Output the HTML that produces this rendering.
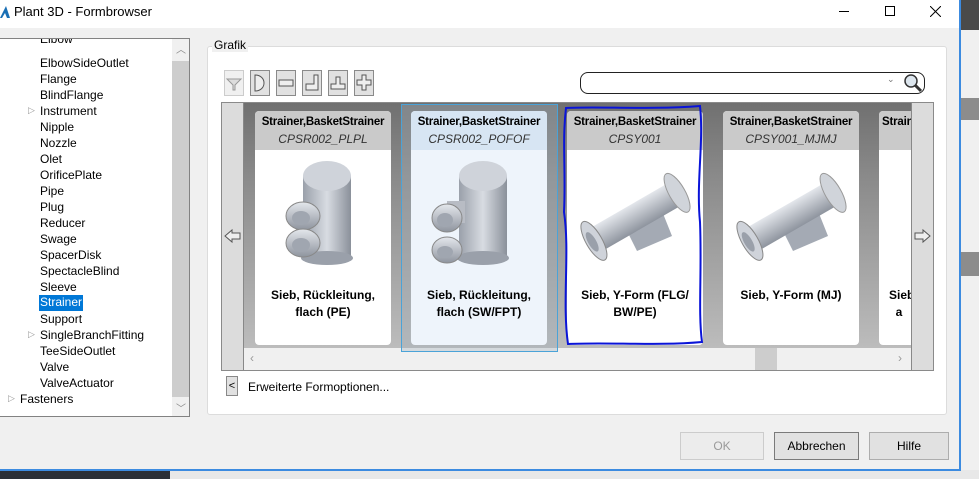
<!DOCTYPE html>
<html><head><meta charset="utf-8"><style>
*{margin:0;padding:0;box-sizing:border-box}
body{width:979px;height:479px;overflow:hidden;background:#fff;font-family:"Liberation Sans",sans-serif;font-size:12px;color:#000;position:relative}
.a{position:absolute}
.tree div{position:absolute;left:40px;font-size:12px;white-space:nowrap}
.tb{position:absolute;top:70px;width:20px;height:26px;background:#e1e1e1;border:1px solid #8a8a8a}
.card{position:absolute;top:111px;width:136px;height:234px;background:#fff;border-radius:4px;overflow:hidden}
.card .h{background:#cacaca;height:39px;text-align:center;padding-top:3px}
.card .h b{display:block;font-size:11.5px;line-height:16px;letter-spacing:-0.2px}
.card .h i{display:block;font-size:12px;line-height:18px;color:#333}
.card .t{position:absolute;top:176px;left:0;width:136px;text-align:center;font-weight:bold;font-size:12px;line-height:17px}
.card svg{position:absolute;left:0;top:45px}
.btn{position:absolute;top:432px;height:28px;border:1px solid #adadad;background:#e1e1e1;text-align:center;line-height:26px;font-size:12px}
</style></head><body>
<div class="a" style="left:961px;top:0;width:18px;height:479px;background:#f0f0f0"></div>
<div class="a" style="left:961px;top:0;width:18px;height:30px;background:#4a4a4a"></div>
<div class="a" style="left:961px;top:98px;width:18px;height:22px;background:#8c8c8c"></div>
<div class="a" style="left:961px;top:252px;width:18px;height:24px;background:#8c8c8c"></div>
<div class="a" style="left:0;top:470px;width:979px;height:9px;background:#e8e8e8"></div>
<div class="a" style="left:0;top:470px;width:170px;height:9px;background:#2b2f36"></div>
<div class="a" style="left:0;top:469px;width:961px;height:2px;background:#3c8be0"></div>
<div class="a" style="left:959px;top:0;width:2px;height:471px;background:#3c8be0"></div>
<div class="a" style="left:0;top:0;width:959px;height:469px;background:#f0f0f0"></div>
<div class="a" style="left:0;top:0;width:959px;height:28px;background:#fff"></div>
<svg class="a" style="left:0;top:5px" width="10" height="14"><path d="M0 13 L6 1 L10 13 L7 13 L5 8 L2 13Z" fill="#1a6fb5"/></svg>
<div class="a" style="left:14px;top:4px;font-size:13px">Plant 3D - Formbrowser</div>
<div class="a" style="left:839px;top:11px;width:10px;height:1px;background:#000"></div>
<div class="a" style="left:885px;top:6px;width:10px;height:10px;border:1px solid #000"></div>
<svg class="a" style="left:930px;top:6px" width="11" height="11"><path d="M0 0L11 11M11 0L0 11" stroke="#000"/></svg>
<div class="a tree" style="left:0;top:38px;width:190px;height:379px;background:#fff;border:1px solid #828282;border-left:none;overflow:hidden">
<div style="top:-7px;color:#000">Elbow</div>
<div style="top:17px">ElbowSideOutlet</div>
<div style="top:33px">Flange</div>
<div style="top:49px">BlindFlange</div>
<div style="top:65px">Instrument</div>
<div style="top:81px">Nipple</div>
<div style="top:97px">Nozzle</div>
<div style="top:113px">Olet</div>
<div style="top:129px">OrificePlate</div>
<div style="top:145px">Pipe</div>
<div style="top:161px">Plug</div>
<div style="top:177px">Reducer</div>
<div style="top:193px">Swage</div>
<div style="top:209px">SpacerDisk</div>
<div style="top:225px">SpectacleBlind</div>
<div style="top:241px">Sleeve</div>
<div style="top:256px;left:39px;background:#0078d7;color:#fff;padding:0 1px;height:16px">Strainer</div>
<div style="top:273px">Support</div>
<div style="top:289px">SingleBranchFitting</div>
<div style="top:305px">TeeSideOutlet</div>
<div style="top:321px">Valve</div>
<div style="top:337px">ValveActuator</div>
<div style="top:353px;left:20px">Fasteners</div>
<div style="top:66px;left:28px;color:#999;font-size:9px">▷</div>
<div style="top:290px;left:28px;color:#999;font-size:9px">▷</div>
<div style="top:354px;left:8px;color:#999;font-size:9px">▷</div>
<div style="left:172px;top:0;width:17px;height:378px;background:#f0f0f0"></div>
<div style="left:172px;top:22px;width:17px;height:336px;background:#cdcdcd"></div>
<div style="left:176px;top:2px;color:#888;font-size:10px">︿</div>
<div style="left:176px;top:361px;color:#888;font-size:10px">﹀</div>
</div>
<div class="a" style="left:207px;top:46px;width:740px;height:369px;background:#fff;border:1px solid #dcdcdc;border-radius:3px"></div>
<div class="a" style="left:212px;top:38px;padding:0 2px;background:#f0f0f0;font-size:12px">Grafik</div>
<div class="tb" style="left:224px;background:#f0f0f0;border-color:#ccc"><svg width="18" height="24"><path d="M2 8H16L10 14V19H8V14Z" fill="#ddd" stroke="#999"/></svg></div>
<div class="tb" style="left:250px"><svg width="18" height="24"><path d="M4 4V20C16 20 16 4 4 4Z" fill="#eee" stroke="#555"/></svg></div>
<div class="tb" style="left:276px"><svg width="18" height="24"><rect x="2" y="9" width="14" height="6" fill="#eee" stroke="#555"/></svg></div>
<div class="tb" style="left:302px"><svg width="18" height="24"><path d="M3 13H11V4H15V19H3Z" fill="#eee" stroke="#555"/></svg></div>
<div class="tb" style="left:328px"><svg width="18" height="24"><path d="M7 6H11V13H16V18H2V13H7Z" fill="#eee" stroke="#555"/></svg></div>
<div class="tb" style="left:354px"><svg width="18" height="24"><path d="M7 4H11V9H16V14H11V19H7V14H2V9H7Z" fill="#eee" stroke="#555"/></svg></div>
<div class="a" style="left:580px;top:72px;width:345px;height:22px;border:1px solid #222;border-radius:8px;background:#fff"></div>
<div class="a" style="left:887px;top:74px;color:#777;font-size:9px">⌄</div>
<svg class="a" style="left:903px;top:73px" width="20" height="20"><circle cx="8" cy="8" r="6" fill="#dde6ee" stroke="#333" stroke-width="1.5"/><path d="M12 12L18 18" stroke="#333" stroke-width="3"/></svg>
<div class="a" style="left:221px;top:102px;width:713px;height:269px;border:1px solid #8a8a8a;background:#dcdcdc"></div>
<div class="a" style="left:243px;top:103px;width:668px;height:245px;background:linear-gradient(#707070,#8a8a8a 30%,#bcbcbc)"></div>
<div class="a" style="left:243px;top:348px;width:668px;height:22px;background:#f0f0f0"></div>
<div class="a" style="left:755px;top:348px;width:22px;height:22px;background:#cdcdcd"></div>
<div class="a" style="left:250px;top:351px;color:#999">‹</div>
<div class="a" style="left:898px;top:351px;color:#999">›</div>
<div class="a" style="left:911px;top:103px;width:1px;height:267px;background:#888"></div>
<div class="a" style="left:243px;top:103px;width:1px;height:267px;background:#888"></div>
<svg class="a" style="left:224px;top:228px" width="18" height="16"><path d="M1 8L8 2V5H16V11H8V14Z" fill="#eee" stroke="#555"/></svg>
<svg class="a" style="left:913px;top:228px" width="18" height="16"><path d="M17 8L10 2V5H2V11H10V14Z" fill="#eee" stroke="#555"/></svg>
<div class="a" style="left:401px;top:104px;width:157px;height:248px;border:1px solid #4aa3d8;background:rgba(160,175,185,.35)"></div>
<svg width="0" height="0" style="position:absolute"><defs>
<linearGradient id="g" x1="0" x2="1"><stop offset="0" stop-color="#9aa0aa"/><stop offset=".5" stop-color="#d8dce2"/><stop offset="1" stop-color="#8a909a"/></linearGradient>
<linearGradient id="g2" x1="0" y1="0" x2="0" y2="1"><stop offset="0" stop-color="#e4e7ec"/><stop offset="1" stop-color="#8e949e"/></linearGradient>
</defs></svg>
<div class="card" style="left:255px"><div class="h"><b>Strainer,BasketStrainer</b><i>CPSR002_PLPL</i></div>
<svg width="136" height="130"><rect x="48" y="20" width="48" height="82" fill="url(#g)"/><ellipse cx="72" cy="102" rx="26" ry="7" fill="#9aa0aa"/><ellipse cx="72" cy="20" rx="24" ry="15" fill="#cfd3da"/><ellipse cx="48" cy="60" rx="17" ry="14" fill="url(#g2)" stroke="#888"/><ellipse cx="46" cy="62" rx="9" ry="7" fill="#a0a6b0"/><ellipse cx="48" cy="87" rx="17" ry="14" fill="url(#g2)" stroke="#888"/><ellipse cx="46" cy="89" rx="9" ry="7" fill="#a0a6b0"/></svg>
<div class="t">Sieb, Rückleitung,<br>flach (PE)</div></div>
<div class="card" style="left:411px;background:#eef4fb"><div class="h" style="background:#d7e5f3"><b>Strainer,BasketStrainer</b><i>CPSR002_POFOF</i></div>
<svg width="136" height="130"><rect x="48" y="20" width="48" height="82" fill="url(#g)"/><ellipse cx="72" cy="102" rx="26" ry="7" fill="#9aa0aa"/><ellipse cx="72" cy="20" rx="24" ry="15" fill="#cfd3da"/><rect x="36" y="45" width="18" height="22" fill="#b8bcc4"/><ellipse cx="36" cy="62" rx="15" ry="14" fill="url(#g2)" stroke="#888"/><ellipse cx="34" cy="64" rx="8" ry="7" fill="#a0a6b0"/><ellipse cx="36" cy="94" rx="15" ry="13" fill="url(#g2)" stroke="#888"/><ellipse cx="34" cy="96" rx="8" ry="6" fill="#a0a6b0"/></svg>
<div class="t">Sieb, Rückleitung,<br>flach (SW/FPT)</div></div>
<div class="card" style="left:567px"><div class="h"><b>Strainer,BasketStrainer</b><i>CPSY001</i></div>
<svg width="136" height="130"><path d="M60 75L95 55L105 80L70 95Z" fill="#a4aab4"/><g transform="rotate(-30 68 60)"><rect x="20" y="48" width="96" height="26" fill="url(#g2)"/><ellipse cx="20" cy="61" rx="8" ry="22" fill="#cfd3da" stroke="#888"/><ellipse cx="18" cy="61" rx="4" ry="11" fill="#9aa0aa"/><ellipse cx="116" cy="61" rx="8" ry="22" fill="#d0d4da" stroke="#999"/></g></svg>
<div class="t">Sieb, Y-Form (FLG/<br>BW/PE)</div></div>
<div class="card" style="left:723px"><div class="h"><b>Strainer,BasketStrainer</b><i>CPSY001_MJMJ</i></div>
<svg width="136" height="130"><path d="M60 75L95 55L105 80L70 95Z" fill="#a4aab4"/><g transform="rotate(-30 68 60)"><rect x="20" y="48" width="96" height="26" fill="url(#g2)"/><ellipse cx="20" cy="61" rx="8" ry="22" fill="#cfd3da" stroke="#888"/><ellipse cx="18" cy="61" rx="4" ry="11" fill="#9aa0aa"/><ellipse cx="116" cy="61" rx="8" ry="22" fill="#d0d4da" stroke="#999"/></g></svg>
<div class="t">Sieb, Y-Form (MJ)</div></div>
<div class="card" style="left:879px;width:32px;border-radius:4px 0 0 4px"><div class="h" style="width:136px;text-align:left;padding-left:3px"><b>Strainer</b></div>
<div class="t" style="text-align:left;left:10px">Sieb<br>&nbsp;&nbsp;a</div></div>
<svg class="a" style="left:558px;top:102px" width="152" height="250"><path d="M8 6C40 4 90 8 142 4C146 40 138 80 142 120C144 170 140 210 144 240C100 244 50 240 10 242C4 200 12 150 6 110C8 70 4 40 8 6Z" fill="none" stroke="#0a14d8" stroke-width="2"/></svg>
<div class="a" style="left:226px;top:376px;width:12px;height:20px;border:1px solid #888;background:#e1e1e1;font-size:11px;text-align:center;line-height:18px">&lt;</div>
<div class="a" style="left:248px;top:380px">Erweiterte Formoptionen...</div>
<div class="btn" style="left:680px;width:84px;color:#9a9a9a;border-color:#ccc;background:#ececec">OK</div>
<div class="btn" style="left:774px;width:85px;border-color:#7a7a7a">Abbrechen</div>
<div class="btn" style="left:869px;width:80px">Hilfe</div>
</body></html>
